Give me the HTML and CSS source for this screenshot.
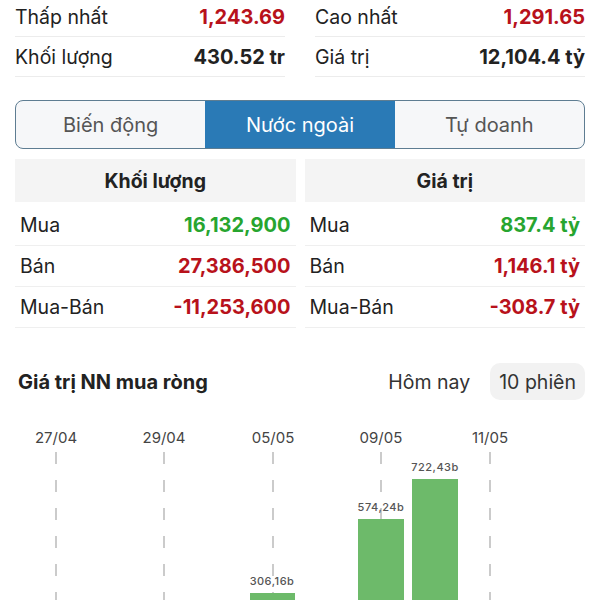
FILE: index.html
```html
<!DOCTYPE html>
<html lang="vi">
<head>
<meta charset="utf-8">
<link rel="stylesheet" href="styles.css">
</head>
<body>
<div class="stats">
  <div class="col">
    <div class="srow"><span class="lbl">Thấp nhất</span><span class="val red">1,243.69</span></div>
    <div class="srow"><span class="lbl">Khối lượng</span><span class="val">430.52 tr</span></div>
  </div>
  <div class="col">
    <div class="srow"><span class="lbl">Cao nhất</span><span class="val red">1,291.65</span></div>
    <div class="srow"><span class="lbl">Giá trị</span><span class="val">12,104.4 tỷ</span></div>
  </div>
</div>

<div class="tabs">
  <div class="tab">Biến động</div>
  <div class="tab active">Nước ngoài</div>
  <div class="tab">Tự doanh</div>
</div>

<div class="tables">
  <div class="tbl">
    <div class="thead">Khối lượng</div>
    <div class="trow"><span class="lbl">Mua</span><span class="val green">16,132,900</span></div>
    <div class="trow"><span class="lbl">Bán</span><span class="val red">27,386,500</span></div>
    <div class="trow"><span class="lbl">Mua-Bán</span><span class="val red">-11,253,600</span></div>
  </div>
  <div class="tbl">
    <div class="thead">Giá trị</div>
    <div class="trow"><span class="lbl">Mua</span><span class="val green">837.4 tỷ</span></div>
    <div class="trow"><span class="lbl">Bán</span><span class="val red">1,146.1 tỷ</span></div>
    <div class="trow"><span class="lbl">Mua-Bán</span><span class="val red">-308.7 tỷ</span></div>
  </div>
</div>

<div class="chart-head">
  <div class="chart-title">Giá trị NN mua ròng</div>
  <div class="seg">
    <span class="pill">Hôm nay</span>
    <span class="pill on">10 phiên</span>
  </div>
</div>

<svg class="chart" width="600" height="190" viewBox="0 0 600 190">
  <g class="dates">
    <text x="56" y="33">27/04</text>
    <text x="164" y="33">29/04</text>
    <text x="273" y="33">05/05</text>
    <text x="381" y="33">09/05</text>
    <text x="490" y="33">11/05</text>
  </g>
  <g class="grid">
    <line x1="56" y1="42" x2="56" y2="190"/>
    <line x1="164" y1="42" x2="164" y2="190"/>
    <line x1="273" y1="42" x2="273" y2="190"/>
    <line x1="381" y1="42" x2="381" y2="190"/>
    <line x1="490" y1="42" x2="490" y2="190"/>
  </g>
  <g class="bars">
    <rect x="250" y="183" width="45" height="10"/>
    <rect x="358" y="109" width="46" height="90"/>
    <rect x="412" y="69" width="46" height="130"/>
  </g>
  <g class="blabels">
    <text x="272" y="175">306,16b</text>
    <text x="381" y="101">574,24b</text>
    <text x="435" y="61">722,43b</text>
  </g>
</svg>
</body>
</html>
```

FILE: styles.css
```css
* { box-sizing: border-box; }
html, body { margin: 0; padding: 0; background: #fff; }
body {
  font-family: Inter, "Noto Sans", sans-serif;
  color: #222;
  width: 600px;
  height: 600px;
  overflow: hidden;
}
.stats {
  display: grid;
  grid-template-columns: 1fr 1fr;
  column-gap: 30px;
  padding: 0 15px;
  margin-top: -3px;
}
.srow {
  display: flex;
  justify-content: space-between;
  align-items: center;
  height: 40px;
  border-bottom: 1px solid #ececec;
  font-size: 19.5px;
}
.lbl { color: #222; font-weight: 400; }
.val { font-weight: 700; color: #222; font-size: 20px; }
.red { color: #b8121b; }
.green { color: #27a52f; }

.tabs {
  display: grid;
  grid-template-columns: 1fr 1fr 1fr;
  margin: 23px 15px 0 15px;
  height: 49px;
  border: 1.5px solid #5e7d92;
  border-radius: 8px;
  overflow: hidden;
  background: #f6f7f9;
}
.tab {
  display: flex;
  align-items: center;
  justify-content: center;
  font-size: 20px;
  color: #555;
}
.tab.active {
  background: #2a7ab6;
  color: #fff;
}

.tables {
  display: grid;
  grid-template-columns: 1fr 1fr;
  column-gap: 9px;
  padding: 0 15px;
  margin-top: 10px;
}
.thead {
  height: 43px;
  margin-bottom: 3px;
  background: #f4f4f4;
  display: flex;
  align-items: center;
  justify-content: center;
  font-weight: 700;
  font-size: 19.5px;
  color: #222;
}
.trow {
  display: flex;
  justify-content: space-between;
  align-items: center;
  height: 41px;
  padding: 0 5px;
  border-bottom: 1px solid #efefef;
  font-size: 19.5px;
}

.chart-head {
  display: flex;
  justify-content: space-between;
  align-items: center;
  margin: 35px 15px 0 18px;
  height: 37px;
}
.chart-title {
  font-weight: 700;
  font-size: 20px;
  color: #222;
}
.seg { display: flex; gap: 11px; }
.pill {
  display: flex;
  align-items: center;
  height: 37px;
  padding: 0 9px;
  font-size: 19.5px;
  color: #333;
  border-radius: 10px;
}
.pill.on { background: #f2f2f2; }

.chart { display: block; margin-top: 10px; }
.dates text {
  font-family: Inter, "Noto Sans", sans-serif;
  font-size: 15px;
  fill: #444;
  text-anchor: middle;
}
.grid line {
  stroke: #a9a9a9;
  stroke-width: 1.2;
  stroke-dasharray: 12 16;
}
.bars rect { fill: #6dba6a; }
.blabels text {
  font-family: Inter, "Noto Sans", sans-serif;
  font-size: 11px;
  font-weight: 500;
  fill: #555;
  text-anchor: middle;
  letter-spacing: 0.5px;
}
```
